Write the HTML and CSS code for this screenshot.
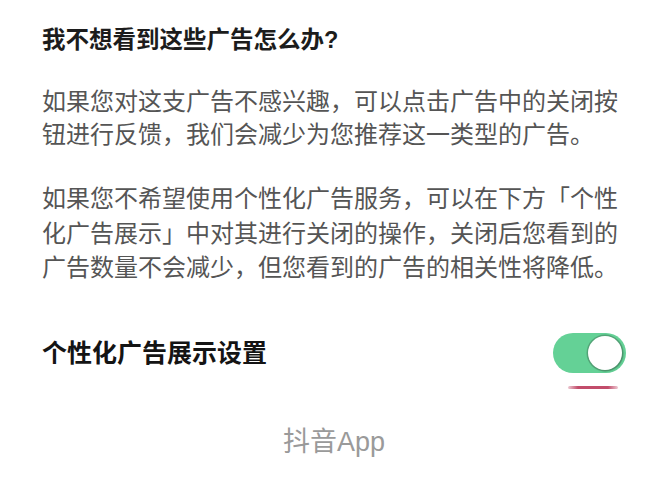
FILE: index.html
```html
<!DOCTYPE html>
<html lang="zh-CN">
<head>
<meta charset="utf-8">
<link rel="stylesheet" href="styles.css">
</head>
<body>
<main class="page">
  <h1 class="title">我不想看到这些广告怎么办?</h1>
  <p class="para para-1">如果您对这支广告不感兴趣，可以点击广告中的关闭按钮进行反馈，我们会减少为您推荐这一类型的广告。</p>
  <p class="para para-2">如果您不希望使用个性化广告服务，可以在下方「个性化广告展示」中对其进行关闭的操作，关闭后您看到的广告数量不会减少，但您看到的广告的相关性将降低。</p>
  <div class="setting">
    <span class="setting-label">个性化广告展示设置</span>
    <div class="switch-wrap">
      <div class="switch"><div class="knob"></div></div>
      <div class="underline"></div>
    </div>
  </div>
  <div class="brand">抖音App</div>
</main>
</body>
</html>
```
FILE: styles.css
```css
html, body {
  margin: 0;
  padding: 0;
  background: #ffffff;
}
body {
  width: 667px;
  height: 500px;
  overflow: hidden;
  font-family: "Liberation Sans", "Noto Sans CJK SC", sans-serif;
}
.page {
  padding: 25px 41px 0 42px;
  display: flex;
  flex-direction: column;
}
.title {
  margin: 0;
  font-size: 23.5px;
  line-height: 30px;
  font-weight: 700;
  color: #1c1c1c;
}
.para {
  margin: 0;
  font-size: 24px;
  color: #555555;
  font-weight: 400;
}
.para-1 {
  margin-top: 31px;
  line-height: 32.5px;
}
.para-2 {
  margin-top: 31px;
  line-height: 34.5px;
}
.setting {
  margin-top: 47px;
  display: flex;
  justify-content: space-between;
  align-items: flex-start;
}
.setting-label {
  font-size: 25px;
  line-height: 40px;
  font-weight: 700;
  color: #141414;
}
.switch-wrap {
  display: flex;
  flex-direction: column;
  align-items: center;
}
.switch {
  width: 73px;
  height: 40px;
  box-sizing: border-box;
  border-radius: 20px;
  background: #64d196;
  padding: 3px 4px;
  display: flex;
  justify-content: flex-end;
  align-items: center;
}
.knob {
  width: 34px;
  height: 34px;
  border-radius: 50%;
  background: #ffffff;
  box-shadow: 0 0 0 1.5px rgba(70, 130, 95, 0.55), 1px 1px 2px rgba(0, 0, 0, 0.25);
}
.underline {
  margin-top: 13px;
  margin-left: 6px;
  width: 50px;
  height: 3px;
  border-radius: 2px;
  background: linear-gradient(to right, rgba(196, 80, 110, 0.3), #c24d6b 20%, #c24d6b 80%, rgba(196, 80, 110, 0.3));
}
.brand {
  margin-top: 38px;
  align-self: center;
  font-size: 27px;
  line-height: 30px;
  color: #9a9a9a;
  font-weight: 400;
}
```
